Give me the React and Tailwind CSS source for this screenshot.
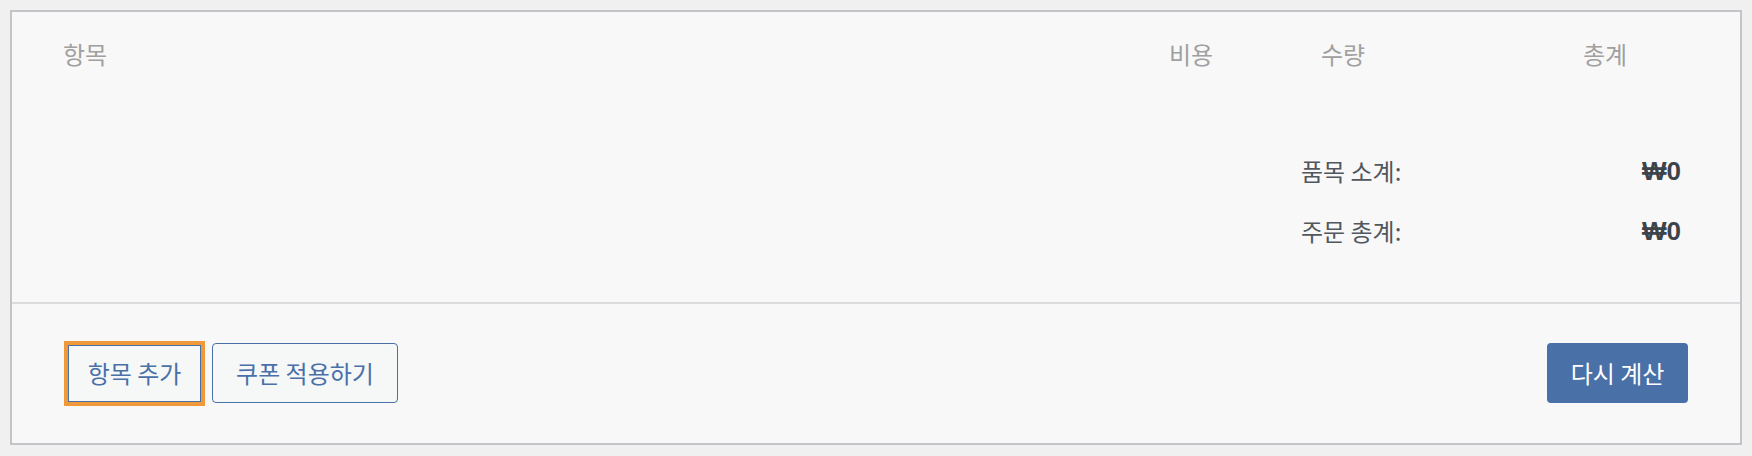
import React from 'react';

const font = { fontFamily: '"Noto Sans CJK KR", "Noto Sans", sans-serif' };

const SummaryRow = ({ label, value }) => (
  <div className="flex h-[60px] items-center justify-between">
    <span className="text-[24px] leading-[32px] text-[#50575e]">{label}</span>
    <span className="font-['Liberation_Sans',sans-serif] text-[26px] leading-[32px] font-bold text-[#3c434a]">{value}</span>
  </div>
);

export default function App() {
  return (
    <div className="min-h-screen bg-[#f0f0f1] p-[10px]" style={font}>
      <div className="border-2 border-[#c3c4c7] bg-[#f8f8f8]">
        <div className="px-[51px] pt-[26px] pb-[41px]">
          <div className="flex text-[24px] leading-[32px] text-[#a0a0a0]">
            <div className="flex-1">항목</div>
            <div className="w-[152px]">비용</div>
            <div className="w-[262px]">수량</div>
            <div className="w-[106px]">총계</div>
          </div>
          <div className="mt-[71px] flex justify-end pr-[8px]">
            <div className="w-[380px]">
              <SummaryRow label="품목 소계:" value="₩0" />
              <SummaryRow label="주문 총계:" value="₩0" />
            </div>
          </div>
        </div>
        <div className="flex items-center border-t-2 border-[#dcdcde] px-[52px] pt-[39px] pb-[40px]">
          <button className="ml-[4px] flex h-[57px] w-[133px] items-center justify-center border border-[#4a70a8] bg-[#f6f7f7] text-[24px] text-[#4a70a8] outline-4 outline-solid outline-[#f0993a]">
            항목 추가
          </button>
          <button className="ml-[11px] flex h-[60px] w-[186px] items-center justify-center rounded-[4px] border border-[#4a70a8] bg-[#f6f7f7] text-[24px] text-[#4a70a8]">
            쿠폰 적용하기
          </button>
          <div className="flex-1" />
          <button className="flex h-[60px] w-[141px] items-center justify-center rounded-[4px] bg-[#4a70a8] text-[24px] text-white">
            다시 계산
          </button>
        </div>
      </div>
    </div>
  );
}
